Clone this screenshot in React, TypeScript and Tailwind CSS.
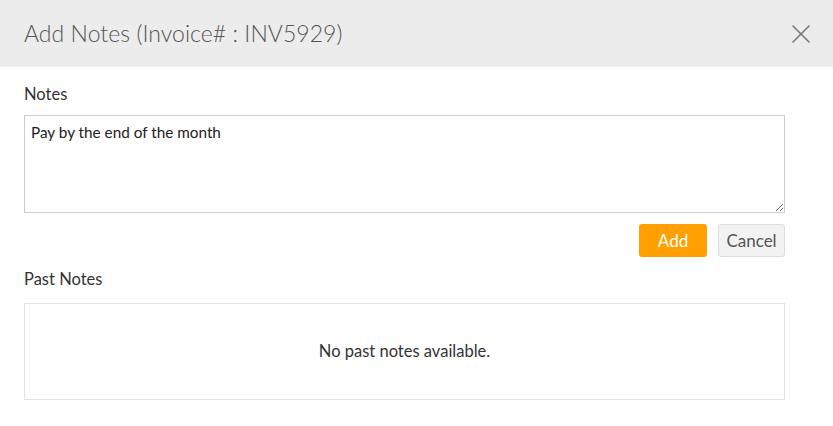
import { X } from "lucide-react";

export default function App() {
  return (
    <div className="w-[833px] h-[426px] bg-white font-['Lato','Liberation_Sans',sans-serif] text-[#333]">
      {/* header */}
      <div className="h-[67px] bg-[#ececec] flex items-center justify-between pl-6 pr-[16px]">
        <h1 className="text-[23px] font-light text-[#555] tracking-[0.05px]">Add Notes (Invoice# : INV5929)</h1>
        <X className="w-[32px] h-[32px] text-[#777]" strokeWidth={1.2} />
      </div>

      <div className="px-6 pt-[16px]">
        <label className="block text-[16.5px] leading-[22px] text-[#333]">Notes</label>
        <textarea
          className="mt-[10px] block w-[761px] h-[98px] border border-[#ccc] px-[6px] py-[6px] text-[15.3px] leading-[20px] text-[#222] outline-none resize-y"
          defaultValue="Pay by the end of the month"
        />
        <div className="flex justify-end gap-[11px] mt-[11px] w-[761px]">
          <button className="w-[68px] h-[33px] rounded-[3px] bg-[#ffa000] text-white text-[17px]">Add</button>
          <button className="w-[67px] h-[33px] rounded-[3px] bg-[#f2f2f2] border border-[#ddd] text-[#555] text-[17px]">Cancel</button>
        </div>

        <div className="mt-[11px] text-[16.5px] leading-[22px] text-[#333]">Past Notes</div>
        <div className="mt-[13px] w-[761px] h-[97px] border border-[#e3e3e3] flex items-center justify-center text-[16.5px] text-[#333]">
          No past notes available.
        </div>
      </div>
    </div>
  );
}
